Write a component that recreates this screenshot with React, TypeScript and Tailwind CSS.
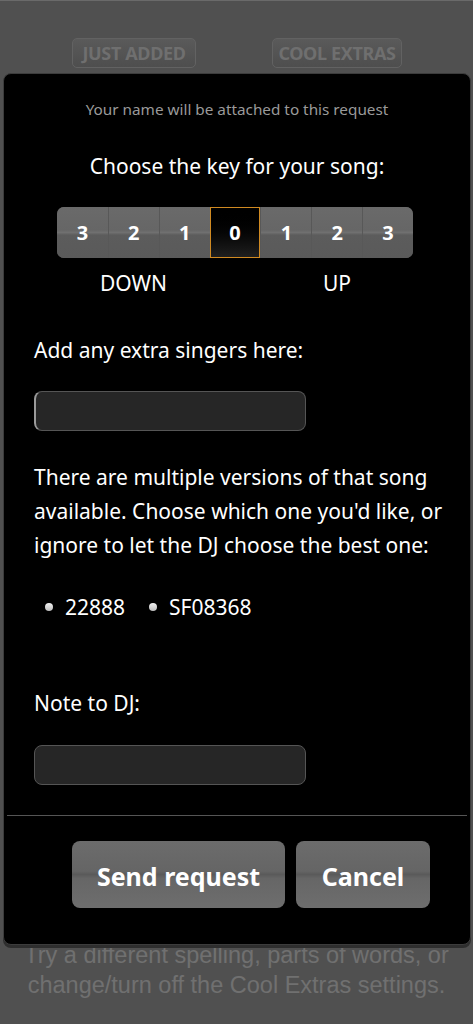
import React from "react";

const dialogFont = { fontFamily: '"Noto Sans", "Open Sans", sans-serif' };

const keySteps = [
  { label: "3", value: -3 },
  { label: "2", value: -2 },
  { label: "1", value: -1 },
  { label: "0", value: 0 },
  { label: "1", value: 1 },
  { label: "2", value: 2 },
  { label: "3", value: 3 },
];

function GhostButton({ children, className }: { children: React.ReactNode; className?: string }) {
  return (
    <div
      className={`flex h-[30px] items-center justify-center rounded-[5px] border border-[#626262] bg-gradient-to-b from-[#5a5a5a] to-[#4e4e4e] text-[18px] font-bold tracking-[-0.02em] text-[#6f6f6f] ${className ?? ""}`}
      style={dialogFont}
    >
      {children}
    </div>
  );
}

function KeyPicker() {
  return (
    <div className="ml-[53px] flex h-[51px] w-[356px] overflow-hidden rounded-[7px] bg-[#5f5f5f]">
      {keySteps.map((step, i) =>
        step.value === 0 ? (
          <div
            key={i}
            className="flex w-[51px] items-center justify-center border border-[#d08a22] bg-gradient-to-b from-[#000000] to-[#1f1f1f] text-[20px] font-bold text-white"
          >
            {step.label}
          </div>
        ) : (
          <div
            key={i}
            className="flex w-[51px] items-center justify-center border-l border-[#585858] bg-[linear-gradient(to_bottom,#6a6a6a_0%,#666666_45%,#707070_50%,#5c5c5c_55%,#5a5a5a_100%)] text-[20px] font-bold text-white first:border-l-0"
          >
            {step.label}
          </div>
        )
      )}
    </div>
  );
}

function TextBox({ focused }: { focused?: boolean }) {
  return (
    <div
      className={`h-[40px] w-[272px] rounded-[8px] border border-[#555555] bg-[#262626] ${
        focused ? "border-l-2 border-l-[#9a9a9a]" : ""
      }`}
    />
  );
}

function Radio({ label }: { label: string }) {
  return (
    <div className="flex items-center gap-[12px]">
      <span className="h-[8px] w-[8px] rounded-full bg-gradient-to-b from-[#f2f2f2] to-[#bdbdbd]" />
      <span>{label}</span>
    </div>
  );
}

function DialogButton({ children, className }: { children: React.ReactNode; className?: string }) {
  return (
    <button
      className={`flex h-[67px] items-center justify-center rounded-[8px] bg-[linear-gradient(to_bottom,#6c6c6c_0%,#656565_45%,#5a5a5a_50%,#666666_56%,#6e6e6e_100%)] pt-[4px] text-[25px] font-bold text-white ${className ?? ""}`}
    >
      {children}
    </button>
  );
}

export default function App() {
  return (
    <div className="relative h-[1024px] w-[473px] overflow-hidden border-t border-[#6a6a6a] bg-[#505050]">
      <div className="flex justify-between px-[72px] pt-[37px]">
        <GhostButton className="w-[124px]">JUST ADDED</GhostButton>
        <GhostButton className="w-[130px] mr-[-1px]">COOL EXTRAS</GhostButton>
      </div>
      <p
        className="mt-[872px] text-center text-[23.5px] leading-[30px] text-[#707070]"
        style={{ fontFamily: '"Liberation Sans", Arial, sans-serif' }}
      >
        Try a different spelling, parts of words, or
        <br />
        change/turn off the Cool Extras settings.
      </p>

      <div
        className="absolute left-[3px] top-[72px] h-[872px] w-[468px] rounded-[8px] border border-[#3c3c3c] bg-black text-white shadow-[0_3px_0_#2e2e2e]"
        style={dialogFont}
      >
        <p className="pt-[25px] text-center text-[15.3px] leading-[20px] text-[#9a9a9a]">
          Your name will be attached to this request
        </p>
        <p className="mt-[33px] text-center text-[21px] leading-[28px]">Choose the key for your song:</p>
        <div className="mt-[27px]">
          <KeyPicker />
        </div>
        <div className="ml-[53px] mt-[11px] flex w-[356px] text-[21px] leading-[28px]">
          <span className="w-[153px] text-center">DOWN</span>
          <span className="w-[51px]" />
          <span className="w-[152px] text-center">UP</span>
        </div>

        <div className="pl-[30px] pr-[16px]">
          <p className="mt-[39px] text-[21px] leading-[28px]">Add any extra singers here:</p>
          <div className="mt-[27px]">
            <TextBox focused />
          </div>
          <p className="mt-[29px] text-[21px] leading-[34px]">
            There are multiple versions of that song
            <br />
            available. Choose which one you'd like, or
            <br />
            ignore to let the DJ choose the best one:
          </p>
          <div className="mt-[31px] flex gap-[24px] pl-[11px] text-[21px] leading-[28px]">
            <Radio label="22888" />
            <Radio label="SF08368" />
          </div>
          <p className="mt-[68px] text-[21px] leading-[28px]">Note to DJ:</p>
          <div className="mt-[28px]">
            <TextBox />
          </div>
        </div>

        <div className="mx-[3px] mt-[30px] h-px bg-[#555555]" />

        <div className="mt-[25px] flex gap-[11px] pl-[68px]">
          <DialogButton className="w-[213px]">Send request</DialogButton>
          <DialogButton className="w-[134px]">Cancel</DialogButton>
        </div>
      </div>
    </div>
  );
}
